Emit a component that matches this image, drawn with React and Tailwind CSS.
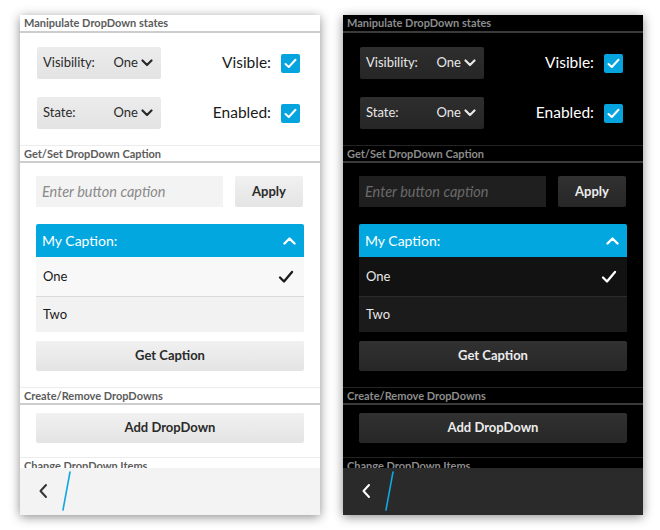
import React from 'react';

const font = { fontFamily: 'Lato, "Noto Sans", sans-serif' };

const ChevronDown = ({ className }) => (
  <svg className={className} width="12" height="8" viewBox="0 0 12 8" fill="none">
    <path d="M1.5 1.5 L6 6 L10.5 1.5" stroke="currentColor" strokeWidth="2.2" strokeLinecap="round" strokeLinejoin="round" />
  </svg>
);

const ChevronUp = () => (
  <svg width="13" height="8" viewBox="0 0 13 8" fill="none">
    <path d="M1.5 6.5 L6.5 1.5 L11.5 6.5" stroke="white" strokeWidth="2.4" strokeLinecap="round" strokeLinejoin="round" />
  </svg>
);

const Check = ({ className }) => (
  <svg className={className} width="16" height="14" viewBox="0 0 16 14" fill="none">
    <path d="M2 7.5 L6 11.5 L14 2" stroke="currentColor" strokeWidth="2.3" strokeLinecap="round" strokeLinejoin="round" />
  </svg>
);

const CheckBox = () => (
  <div className="w-[19px] h-[19px] rounded-[2px] bg-[#05a4df] flex items-center justify-center">
    <svg width="13" height="11" viewBox="0 0 13 11" fill="none">
      <path d="M1.5 6 L4.8 9 L11.5 1.8" stroke="white" strokeWidth="2" strokeLinecap="round" strokeLinejoin="round" />
    </svg>
  </div>
);

const Panel = ({ dark }) => {
  const header = dark
    ? 'h-[17px] shrink-0 px-[4px] text-[11px] font-bold leading-[15px] text-[#8c8c8c] border-b-2 border-[#3a3a3a]'
    : 'h-[17px] shrink-0 px-[4px] text-[11px] font-bold leading-[15px] text-[#5c5c5c] border-b-2 border-[#cdcdcd]';
  const faint = dark ? 'border-t border-[#242424]' : 'border-t border-[#ececec]';
  const select = dark
    ? 'w-[124px] h-[32px] rounded-[2px] bg-gradient-to-b from-[#2e2e2e] to-[#262626] text-[#e8e8e8] flex items-center pl-[6px] pr-[8px] text-[13px]'
    : 'w-[124px] h-[32px] rounded-[2px] bg-gradient-to-b from-[#ececec] to-[#e3e3e3] text-[#2a2a2a] flex items-center pl-[6px] pr-[8px] text-[13px]';
  const button = dark
    ? 'h-[30px] rounded-[2px] bg-gradient-to-b from-[#313131] to-[#272727] text-[#ececec] font-bold text-[13px] flex items-center justify-center'
    : 'h-[30px] rounded-[2px] bg-gradient-to-b from-[#f1f1f1] to-[#e4e4e4] text-[#2a2a2a] font-bold text-[13px] flex items-center justify-center';
  const label = dark ? 'text-[15.5px] text-white' : 'text-[15.5px] text-[#1a1a1a]';

  return (
    <div
      style={font}
      className={
        dark
          ? 'w-[300px] h-[500px] bg-black flex flex-col overflow-hidden shadow-[0_2px_10px_rgba(0,0,0,0.45)]'
          : 'w-[300px] h-[500px] bg-white flex flex-col overflow-hidden shadow-[0_2px_10px_rgba(0,0,0,0.45)]'
      }
    >
      <div className="flex-1 overflow-hidden flex flex-col">
        {/* section 1 */}
        <div className={header + ' h-[18px] leading-[16px]'}>Manipulate DropDown states</div>
        <div className="pl-[17px] pr-[20px] pt-[14px] pb-[16px] flex flex-col gap-[18px]">
          {[['Visibility:', 'Visible:'], ['State:', 'Enabled:']].map(([a, b]) => (
            <div key={a} className="flex items-center">
              <div className={select}>
                <span className="flex-1">{a}</span>
                <span>One</span>
                <ChevronDown className="ml-[3px]" />
              </div>
              <div className="flex-1 flex items-center justify-end gap-[10px]">
                <span className={label}>{b}</span>
                <CheckBox />
              </div>
            </div>
          ))}
        </div>

        {/* section 2 */}
        <div className={faint} />
        <div className={header}>Get/Set DropDown Caption</div>
        <div className="px-[16px] pt-[13px] pb-[16px] flex flex-col">
          <div className="flex gap-[12px]">
            <div
              className={
                dark
                  ? 'w-[187px] h-[31px] bg-[#1f1f1f] text-[#6a6a6a] italic text-[14.5px] flex items-center pl-[6px]'
                  : 'w-[187px] h-[31px] bg-[#f3f3f3] text-[#8a8a8a] italic text-[14.5px] flex items-center pl-[6px]'
              }
            >
              Enter button caption
            </div>
            <div className={button + ' w-[68px] h-[31px]'}>Apply</div>
          </div>

          <div className="mt-[17px] h-[33px] rounded-t-[2px] bg-[#02a7df] text-white text-[14px] flex items-center justify-between pl-[6px] pr-[8px]">
            <span>My Caption:</span>
            <ChevronUp />
          </div>
          <div
            className={
              dark
                ? 'h-[40px] bg-[#121212] border-b border-[#2c2c2c] text-[#e8e8e8] text-[13px] flex items-center justify-between pl-[7px] pr-[10px]'
                : 'h-[40px] bg-[#f8f8f8] border-b border-[#dadada] text-[#1a1a1a] text-[13px] flex items-center justify-between pl-[7px] pr-[10px]'
            }
          >
            <span>One</span>
            <Check className={dark ? 'text-white' : 'text-[#1a1a1a]'} />
          </div>
          <div
            className={
              dark
                ? 'h-[35px] bg-[#1b1b1b] text-[#e8e8e8] text-[13px] flex items-center pl-[7px]'
                : 'h-[35px] bg-[#f2f2f2] text-[#1a1a1a] text-[13px] flex items-center pl-[7px]'
            }
          >
            Two
          </div>
          <div className={button + ' mt-[9px]'}>Get Caption</div>
        </div>

        {/* section 3 */}
        <div className={faint} />
        <div className={header}>Create/Remove DropDowns</div>
        <div className="px-[16px] pt-[8px] pb-[14px]">
          <div className={button}>Add DropDown</div>
        </div>

        <div className={faint} />
        <div className={header}>Change DropDown Items</div>
      </div>

      {/* action bar */}
      <div className={dark ? 'h-[47px] shrink-0 bg-[#2a2a2a] flex items-center' : 'h-[47px] shrink-0 bg-[#f3f3f3] flex items-center'}>
        <svg width="60" height="47" viewBox="0 0 60 47" fill="none">
          <path d="M26 17 L20.5 23 L26 29" stroke={dark ? '#ffffff' : '#333333'} strokeWidth="2" strokeLinecap="round" strokeLinejoin="round" />
          <path d="M50 4 L43 42" stroke="#12a6e0" strokeWidth="1.6" strokeLinecap="round" />
        </svg>
      </div>
    </div>
  );
};

export default function App() {
  return (
    <div className="w-[660px] h-[530px] bg-white flex gap-[23px] pl-[20px] pt-[15px]">
      <Panel />
      <Panel dark />
    </div>
  );
}
